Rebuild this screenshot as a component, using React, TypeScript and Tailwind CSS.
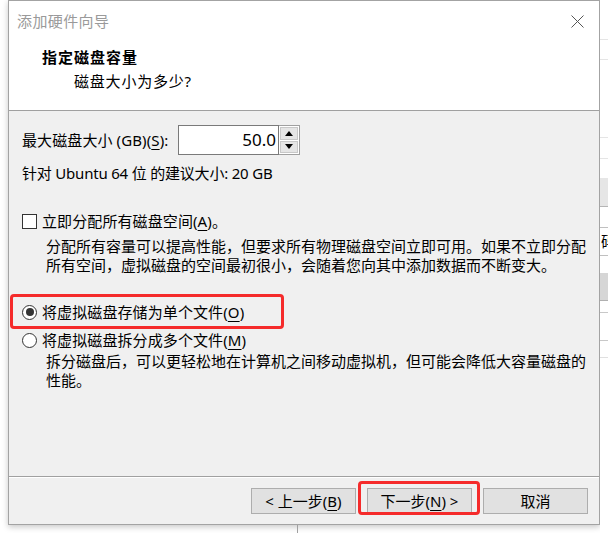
import React from "react";

const font = { fontFamily: '"Noto Sans", "Noto Sans CJK SC", sans-serif' };

function U({ children }: { children: React.ReactNode }) {
  return <span className="underline underline-offset-[3px] decoration-1">{children}</span>;
}

function Radio({ checked }: { checked?: boolean }) {
  return (
    <span className="w-[15px] h-[15px] rounded-full border border-[#333] bg-white flex items-center justify-center shrink-0">
      {checked && <span className="w-[8px] h-[8px] rounded-full bg-[#333]" />}
    </span>
  );
}

function Button({ children }: { children: React.ReactNode }) {
  return (
    <button className="w-[105px] h-[26px] bg-[#e1e1e1] border border-[#adadad] text-[15px] leading-none text-black flex items-center justify-center">
      {children}
    </button>
  );
}

function BackgroundStrip() {
  return (
    <div className="w-[8px] h-full bg-white flex flex-col">
      <div className="h-[40px] border-b border-[#e5e5e5]" />
      <div className="h-[20px] border-b border-[#e5e5e5]" />
      <div className="h-[78px] border-b border-[#e5e5e5]" />
      <div className="h-[21px] border-b border-[#e5e5e5]" />
      <div className="h-[19px]" />
      <div className="h-[29px] bg-[#e6e6e6] border-b border-[#b5b5b5]" />
      <div className="h-[21px] border-b border-[#c0c0c0]" />
      <div className="h-[27px] text-[15px] leading-[27px] whitespace-nowrap overflow-hidden pl-[1px]">码</div>
      <div className="h-[18px] border-t border-[#c0c0c0]" />
      <div className="h-[28px] bg-[#d6d6d6] border-b border-[#b0b0b0]" />
      <div className="h-[12px] border-b border-[#c8c8c8]" />
      <div className="h-[28px] border-b border-[#c8c8c8]" />
      <div className="h-[17px] border-b border-[#e0e0e0]" />
    </div>
  );
}

export default function App() {
  return (
    <div className="relative w-[608px] h-[533px] bg-white overflow-hidden text-black" style={font}>
      <div className="flex h-full">
        <div className="w-[8px] shrink-0" />
        <div className="w-[592px] shrink-0 flex flex-col">
          <div className="h-[525px] border border-[#a3a3a3] bg-[#f0f0f0] flex flex-col shadow-[0_2px_6px_rgba(0,0,0,0.22)]">
            {/* header */}
            <div className="h-[110px] bg-white border-b border-[#a0a0a0] flex flex-col">
              <div className="h-[40px] flex items-center justify-between pl-[8px] pr-[15px]">
                <span className="text-[15px] text-[#9a9a9a] tracking-[0.4px]">添加硬件向导</span>
                <svg width="13" height="13" viewBox="0 0 13 13">
                  <path d="M0.5 0.5 L12.5 12.5 M12.5 0.5 L0.5 12.5" stroke="#555" strokeWidth="1" />
                </svg>
              </div>
              <div className="mt-[6px] pl-[33px] h-[20px] leading-[20px] text-[15px] font-bold tracking-[1px]">
                指定磁盘容量
              </div>
              <div className="mt-[4px] pl-[65px] h-[20px] leading-[20px] text-[15px] tracking-[0.8px]">
                磁盘大小为多少?
              </div>
            </div>

            {/* body */}
            <div className="flex-1 border-b border-[#a0a0a0] pl-[13px] text-[15px] flex flex-col">
              <div className="mt-[14px] h-[30px] flex items-center">
                <span className="w-[156px] tracking-[0.1px]">
                  最大磁盘大小 (GB)(<U>S</U>):
                </span>
                <div className="flex h-[30px]">
                  <div className="w-[101px] h-full bg-white border border-[#7a7a7a] flex items-center justify-end pr-[2px] text-[17px]">
                    50.0
                  </div>
                  <div className="w-[21px] h-full border border-l-0 border-[#a0a0a0] flex flex-col bg-white">
                    <div className="flex-1 m-[1px] mb-0 bg-[#e5e5e5] border border-[#c8c8c8] flex items-center justify-center">
                      <svg width="8" height="5" viewBox="0 0 8 5"><path d="M0 5 L4 0 L8 5 Z" fill="#000" /></svg>
                    </div>
                    <div className="flex-1 m-[1px] bg-[#e5e5e5] border border-[#c8c8c8] flex items-center justify-center">
                      <svg width="8" height="5" viewBox="0 0 8 5"><path d="M0 0 L4 5 L8 0 Z" fill="#000" /></svg>
                    </div>
                  </div>
                </div>
              </div>

              <div className="mt-[8px] h-[20px] leading-[20px] tracking-[-0.2px]">
                针对 Ubuntu 64 位 的建议大小: 20 GB
              </div>

              <div className="mt-[28px] h-[20px] flex items-center gap-[5px]">
                <span className="w-[15px] h-[15px] border border-[#333] bg-white shrink-0" />
                <span className="leading-[20px] tracking-[0.1px]">
                  立即分配所有磁盘空间(<U>A</U>)。
                </span>
              </div>
              <div className="mt-[6px] pl-[24px] leading-[19px] whitespace-nowrap">
                <div>分配所有容量可以提高性能，但要求所有物理磁盘空间立即可用。如果不立即分配</div>
                <div>所有空间，虚拟磁盘的空间最初很小，会随着您向其中添加数据而不断变大。</div>
              </div>

              <div className="mt-[27px] h-[20px] flex items-center gap-[5px]">
                <Radio checked />
                <span className="leading-[20px] tracking-[0.1px]">
                  将虚拟磁盘存储为单个文件(<U>O</U>)
                </span>
              </div>
              <div className="mt-[8px] h-[20px] flex items-center gap-[5px]">
                <Radio />
                <span className="leading-[20px] tracking-[0.1px]">
                  将虚拟磁盘拆分成多个文件(<U>M</U>)
                </span>
              </div>
              <div className="mt-[2px] pl-[24px] leading-[19px] whitespace-nowrap">
                <div>拆分磁盘后，可以更轻松地在计算机之间移动虚拟机，但可能会降低大容量磁盘的</div>
                <div>性能。</div>
              </div>
            </div>

            {/* footer */}
            <div className="h-[47px] border-t border-white flex justify-end items-start pt-[10px] pr-[11px] gap-[11px]">
              <Button>
                &lt; 上一步(<U>B</U>)
              </Button>
              <Button>
                下一步(<U>N</U>) &gt;
              </Button>
              <Button>取消</Button>
            </div>
          </div>
          <div className="h-[8px] pl-[289px]">
            <div className="w-px h-full bg-[#a0a0a0]" />
          </div>
        </div>
        <BackgroundStrip />
      </div>

      {/* red annotation boxes */}
      <div className="absolute left-[10px] top-[294px] w-[274px] h-[35px] border-[3px] border-[#f52b2b] rounded-[4px] pointer-events-none" />
      <div className="absolute left-[358px] top-[481px] w-[122px] h-[34px] border-[3px] border-[#f52b2b] rounded-[4px] pointer-events-none" />
    </div>
  );
}
